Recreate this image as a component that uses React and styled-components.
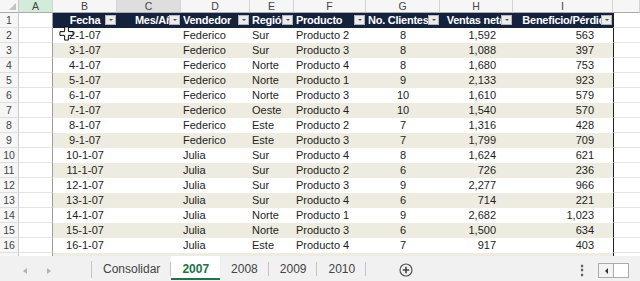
import React from "react";
import styled, { createGlobalStyle } from "styled-components";

const GlobalStyle = createGlobalStyle`
  body {
    margin: 0;
    font-family: "Liberation Sans", Arial, sans-serif;
    background: #fff;
  }
`;

const cols = "19px 34px 64px 64px 69px 44px 72px 74px 73px 100px 1fr";

const Window = styled.div`
  width: 640px;
  height: 281px;
  display: flex;
  flex-direction: column;
  overflow: hidden;
  background: #fff;
`;

const Sheet = styled.div`
  position: relative;
  height: 256px;
  overflow: hidden;
`;

const Row = styled.div`
  display: grid;
  grid-template-columns: ${cols};
  height: ${(p) => p.$h || 15}px;
`;

const Corner = styled.div`
  position: relative;
  background: #f6f6f6;
  border-right: 1px solid #c9c9c9;
  border-bottom: 1px solid #ababab;
  &::after {
    content: "";
    position: absolute;
    right: 2px;
    bottom: 2px;
    border-left: 7px solid transparent;
    border-bottom: 7px solid #c3c3c3;
  }
`;

const ColHead = styled.div`
  background: ${(p) =>
    p.$state === "sel" ? "#d3ecda" : p.$state === "hover" ? "#dedede" : "#f6f6f6"};
  border-right: 1px solid #d4d4d4;
  border-bottom: 1px solid #ababab;
  color: #444;
  font-size: 10.5px;
  line-height: 12px;
  text-align: center;
`;

const RowNum = styled.div`
  background: #f6f6f6;
  border-right: 1px solid #c9c9c9;
  border-bottom: 1px solid #dedede;
  color: #444;
  font-size: 10.5px;
  line-height: 14px;
  text-align: center;
`;

const Blank = styled.div`
  border-bottom: 1px solid #e4e4e4;
  border-right: ${(p) => (p.$edge ? "1px solid #9c9c9c" : "none")};
  border-left: ${(p) => (p.$frame ? "1px solid #222" : "none")};
`;

const HeadCell = styled.div`
  position: relative;
  background: #14223e;
  color: #fff;
  font-weight: bold;
  font-size: 11px;
  letter-spacing: -0.25px;
  line-height: 15px;
  padding: 0 2px;
  text-align: ${(p) => p.$align || "left"};
  white-space: nowrap;
  overflow: hidden;
`;

const Filter = styled.span`
  position: absolute;
  right: 1px;
  top: 2px;
  width: 11px;
  height: 10px;
  background: #ececec;
  border: 1px solid #b5b5b5;
  box-sizing: border-box;
  display: flex;
  align-items: center;
  justify-content: center;
  &::after {
    content: "";
    border-left: 2px solid transparent;
    border-right: 2px solid transparent;
    border-top: 2px solid #555;
  }
`;

const Cell = styled.div`
  background: ${(p) => (p.$band ? "#eeece1" : "#fff")};
  color: #1e1e1e;
  font-size: 11px;
  line-height: 15px;
  white-space: nowrap;
  overflow: hidden;
  text-align: ${(p) => p.$align || "left"};
  padding: ${(p) => (p.$pad ? `0 ${p.$pad}px 0 0` : "0 2px")};
`;

const Cursor = styled.svg`
  position: absolute;
  left: 59px;
  top: 26px;
`;

const TabBar = styled.div`
  height: 25px;
  display: flex;
  align-items: stretch;
  background: #f1f1f1;
  font-size: 12px;
`;

const Nav = styled.div`
  width: 92px;
  display: flex;
  align-items: center;
  gap: 20px;
  padding: 3px 0 0 23px;
  box-sizing: border-box;
  border-right: 1px solid #c4c4c4;
  margin: 5px 0 3px;
`;

const Arrow = styled.span`
  width: 0;
  height: 0;
  border-top: 3px solid transparent;
  border-bottom: 3px solid transparent;
  ${(p) =>
    p.$dir === "left"
      ? "border-right: 4px solid #b3b3b3;"
      : "border-left: 4px solid #b3b3b3;"}
`;

const Tab = styled.div`
  position: relative;
  display: flex;
  align-items: center;
  padding: 3px 11px 0 11px;
  color: ${(p) => (p.$active ? "#217346" : "#444")};
  font-weight: ${(p) => (p.$active ? "bold" : "normal")};
  background: ${(p) => (p.$active ? "#fff" : "transparent")};
  border-bottom: 2px solid ${(p) => (p.$active ? "#217346" : "transparent")};
  margin-bottom: 1px;
  &::after {
    content: "";
    display: ${(p) => (p.$active ? "none" : "block")};
    position: absolute;
    right: 0;
    top: 6px;
    bottom: 2px;
    width: 1px;
    background: #c4c4c4;
  }
`;

const AddBtn = styled.div`
  margin-left: 33px;
  padding-top: 2px;
  display: flex;
  align-items: center;
`;

const Spacer = styled.div`
  flex: 1;
`;

const Dots = styled.div`
  display: flex;
  align-items: center;
  padding-top: 2px;
  color: #444;
  font-weight: bold;
  font-size: 12px;
  margin-right: 10px;
`;

const Scroll = styled.div`
  display: flex;
  align-self: center;
  height: 15px;
  margin-top: 4px;
  border: 1px solid #ababab;
  box-sizing: border-box;
  width: 31px;
  margin-right: 11px;
`;

const ScrollArrow = styled.div`
  width: 14px;
  display: flex;
  align-items: center;
  justify-content: center;
  background: #f3f3f3;
  border-right: 1px solid #ababab;
  &::after {
    content: "";
    border-top: 3px solid transparent;
    border-bottom: 3px solid transparent;
    border-right: 3px solid #333;
  }
`;

const Thumb = styled.div`
  flex: 1;
  background: #fff;
`;

const headers = [
  { label: "Fecha", align: "center" },
  { label: "Mes/Año", align: "right" },
  { label: "Vendedor", align: "left" },
  { label: "Región", align: "left" },
  { label: "Producto", align: "left" },
  { label: "No. Clientes", align: "left" },
  { label: "Ventas netas", align: "right" },
  { label: "Beneficio/Pérdida", align: "right" },
];

const data = [
  ["2-1-07", "Federico", "Sur", "Producto 2", "8", "1,592", "563"],
  ["3-1-07", "Federico", "Sur", "Producto 3", "8", "1,088", "397"],
  ["4-1-07", "Federico", "Norte", "Producto 4", "8", "1,680", "753"],
  ["5-1-07", "Federico", "Norte", "Producto 1", "9", "2,133", "923"],
  ["6-1-07", "Federico", "Norte", "Producto 3", "10", "1,610", "579"],
  ["7-1-07", "Federico", "Oeste", "Producto 4", "10", "1,540", "570"],
  ["8-1-07", "Federico", "Este", "Producto 2", "7", "1,316", "428"],
  ["9-1-07", "Federico", "Este", "Producto 3", "7", "1,799", "709"],
  ["10-1-07", "Julia", "Sur", "Producto 4", "8", "1,624", "621"],
  ["11-1-07", "Julia", "Sur", "Producto 2", "6", "726", "236"],
  ["12-1-07", "Julia", "Sur", "Producto 3", "9", "2,277", "966"],
  ["13-1-07", "Julia", "Sur", "Producto 4", "6", "714", "221"],
  ["14-1-07", "Julia", "Norte", "Producto 1", "9", "2,682", "1,023"],
  ["15-1-07", "Julia", "Norte", "Producto 3", "6", "1,500", "634"],
  ["16-1-07", "Julia", "Este", "Producto 4", "7", "917", "403"],
];

const letters = ["A", "B", "C", "D", "E", "F", "G", "H", "I", ""];

export default function App() {
  return (
    <Window>
      <GlobalStyle />
      <Sheet>
        <Row $h={13}>
          <Corner />
          {letters.map((l, i) => (
            <ColHead key={i} $state={l === "A" ? "sel" : l === "C" ? "hover" : ""}>
              {l}
            </ColHead>
          ))}
        </Row>
        <Row>
          <RowNum>1</RowNum>
          <Blank $edge />
          {headers.map((h) => (
            <HeadCell key={h.label} $align={h.align}>
              {h.label}
              <Filter />
            </HeadCell>
          ))}
          <Blank $frame />
        </Row>
        {data.map((r, i) => {
          const band = i % 2 === 1;
          return (
            <Row key={r[0]}>
              <RowNum>{i + 2}</RowNum>
              <Blank $edge />
              <Cell $band={band} $align="center">{r[0]}</Cell>
              <Cell $band={band} />
              <Cell $band={band}>{r[1]}</Cell>
              <Cell $band={band}>{r[2]}</Cell>
              <Cell $band={band}>{r[3]}</Cell>
              <Cell $band={band} $align="center">{r[4]}</Cell>
              <Cell $band={band} $align="right" $pad={17}>{r[5]}</Cell>
              <Cell $band={band} $align="right" $pad={19}>{r[6]}</Cell>
              <Blank $frame />
            </Row>
          );
        })}
        <Row>
          <RowNum />
          <Blank $edge />
          <Cell $band />
          <Cell $band />
          <Cell $band />
          <Cell $band />
          <Cell $band />
          <Cell $band />
          <Cell $band />
          <Cell $band />
          <Blank $frame />
        </Row>
        <Cursor width="15" height="15" viewBox="-1 -1 16 16">
          <polygon
            points="5,0 9,0 9,5 14,5 14,9 9,9 9,14 5,14 5,9 0,9 0,5 5,5"
            fill="#fff"
            stroke="#000"
            strokeWidth="1"
          />
        </Cursor>
      </Sheet>
      <TabBar>
        <Nav>
          <Arrow $dir="left" />
          <Arrow $dir="right" />
        </Nav>
        <Tab>Consolidar</Tab>
        <Tab $active>2007</Tab>
        <Tab>2008</Tab>
        <Tab>2009</Tab>
        <Tab>2010</Tab>
        <AddBtn>
          <svg width="14" height="14" viewBox="0 0 14 14">
            <circle cx="7" cy="7" r="6" fill="none" stroke="#555" strokeWidth="1.2" />
            <path d="M7 3.8v6.4M3.8 7h6.4" stroke="#444" strokeWidth="1.6" />
          </svg>
        </AddBtn>
        <Spacer />
        <Dots>⋮</Dots>
        <Scroll>
          <ScrollArrow />
          <Thumb />
        </Scroll>
      </TabBar>
    </Window>
  );
}
